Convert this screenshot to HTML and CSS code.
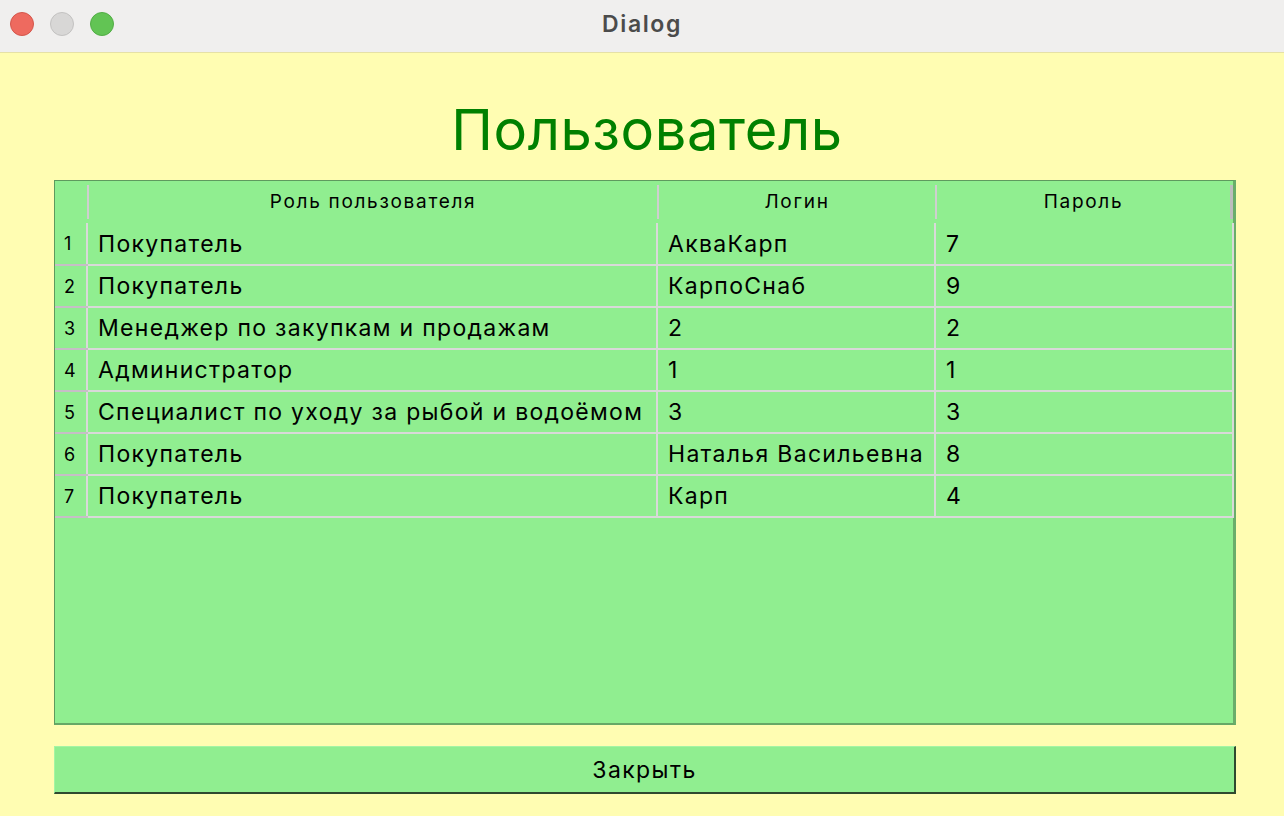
FILE: index.html
```html
<!DOCTYPE html>
<html lang="ru">
<head>
<meta charset="utf-8">
<title>Dialog</title>
<link rel="stylesheet" href="styles.css">
</head>
<body>
<div class="window">
  <div class="titlebar">
    <div class="lights">
      <span class="light red"></span>
      <span class="light gray"></span>
      <span class="light green"></span>
    </div>
    <div class="wtitle">Dialog</div>
  </div>
  <div class="content">
    <h1 class="heading">Пользователь</h1>
    <div class="tablebox">
      <table class="grid">
        <thead>
          <tr>
            <th class="corner"></th>
            <th class="hc c1"><span>Роль пользователя</span></th>
            <th class="hc c2"><span>Логин</span></th>
            <th class="hc c3"><span>Пароль</span></th>
          </tr>
        </thead>
        <tbody>
          <tr><td class="rh">1</td><td>Покупатель</td><td>АкваКарп</td><td>7</td></tr>
          <tr><td class="rh">2</td><td>Покупатель</td><td>КарпоСнаб</td><td>9</td></tr>
          <tr><td class="rh">3</td><td>Менеджер по закупкам и продажам</td><td>2</td><td>2</td></tr>
          <tr><td class="rh">4</td><td>Администратор</td><td>1</td><td>1</td></tr>
          <tr><td class="rh">5</td><td>Специалист по уходу за рыбой и водоёмом</td><td>3</td><td>3</td></tr>
          <tr><td class="rh">6</td><td>Покупатель</td><td>Наталья Васильевна</td><td>8</td></tr>
          <tr><td class="rh">7</td><td>Покупатель</td><td>Карп</td><td>4</td></tr>
        </tbody>
      </table>
    </div>
    <button class="closebtn">Закрыть</button>
  </div>
</div>
</body>
</html>
```
FILE: styles.css
```css
* { box-sizing: border-box; }
html, body {
  margin: 0;
  padding: 0;
  width: 1284px;
  height: 816px;
  overflow: hidden;
  font-family: Inter, "Liberation Sans", Arial, sans-serif;
}
.window {
  width: 1284px;
  height: 816px;
  display: flex;
  flex-direction: column;
  background: #fffdb2;
}
.titlebar {
  height: 53px;
  flex: none;
  background: #f0efee;
  border-bottom: 1px solid #e6e1a6;
  display: flex;
  align-items: center;
  position: relative;
}
.lights {
  display: flex;
  gap: 16px;
  padding-left: 10px;
  padding-bottom: 4px;
}
.light {
  width: 24px;
  height: 24px;
  border-radius: 50%;
  display: block;
}
.light.red { background: #ee6a5f; border: 1px solid #d4564b; }
.light.gray { background: #d8d7d6; border: 1px solid #c3c2c1; }
.light.green { background: #62c454; border: 1px solid #52ad45; }
.wtitle {
  position: absolute;
  left: 0;
  right: 0;
  top: 10px;
  text-align: center;
  font-size: 23px;
  font-weight: 600;
  letter-spacing: 1.6px;
  color: #4b4b4b;
}
.content {
  flex: 1;
  padding: 0 48px 0 54px;
  display: flex;
  flex-direction: column;
}
.heading {
  margin: 42px 0 0 0;
  height: 85px;
  text-align: center;
  font-weight: normal;
  font-size: 56px;
  line-height: 70px;
  letter-spacing: 0.6px;
  color: #008000;
  padding-left: 4px;
}
.tablebox {
  height: 545px;
  background: #90ee90;
  border: 1px solid #5e9a5e;
  border-right: 3px solid #6aae6a;
  border-bottom: 2px solid #66a866;
}
.grid {
  border-collapse: collapse;
  table-layout: fixed;
  width: 1178px;
}
.grid th {
  height: 42px;
  font-weight: normal;
  font-size: 19px;
  letter-spacing: 1.7px;
  color: #000;
  padding: 4px 0 4px 0;
}
.grid th span {
  display: block;
  height: 34px;
  line-height: 34px;
  border-left: 2px solid #cfcfcf;
}
.grid th.c3 span { border-right: 3px solid #bdbdbd; }
.grid th.corner { width: 32px; }
.grid th.c1 { width: 570px; }
.grid th.c2 { width: 278px; }
.grid th.c3 { width: 298px; }
.grid td {
  height: 42px;
  font-size: 23px;
  letter-spacing: 1.3px;
  color: #000;
  padding: 0 0 0 10px;
  border-left: 2px solid #d9d9d9;
  border-bottom: 2px solid #d9d9d9;
  white-space: nowrap;
  overflow: hidden;
}
.grid td:last-child { border-right: 2px solid #d9d9d9; }
.grid td.rh {
  font-size: 18px;
  letter-spacing: 0;
  padding-left: 9px;
  border-left: none;
  border-bottom: 2px solid #c6bec6;
}
.closebtn {
  margin-top: 21px;
  height: 48px;
  width: 1182px;
  background: #90ee90;
  border: none;
  border-top: 1px solid #a4f4a4;
  border-left: 1px solid #a4f4a4;
  border-right: 2px solid #2f4a2f;
  border-bottom: 2px solid #2f4a2f;
  font-family: Inter, "Liberation Sans", Arial, sans-serif;
  font-size: 23px;
  letter-spacing: 1.4px;
  color: #000;
  padding: 0;
}
```
